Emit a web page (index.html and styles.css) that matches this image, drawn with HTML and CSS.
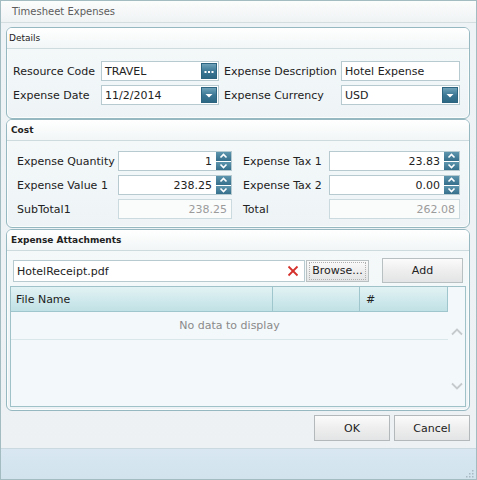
FILE: index.html
```html
<!DOCTYPE html>
<html>
<head>
<meta charset="utf-8">
<link rel="stylesheet" href="styles.css">
</head>
<body>
<div class="window">
  <div class="titlebar">Timesheet Expenses</div>
  <div class="main">
    <section class="panel details">
      <div class="panel-header">Details</div>
      <div class="details-grid">
        <span class="lbl">Resource Code</span>
        <div class="input"><span class="val">TRAVEL</span><span class="ibtn"><svg width="14" height="14" viewBox="0 0 14 14"><rect x="2.5" y="7" width="2" height="2" fill="#fff"/><rect x="6" y="7" width="2" height="2" fill="#fff"/><rect x="9.5" y="7" width="2" height="2" fill="#fff"/></svg></span></div>
        <span class="lbl lbl2">Expense Description</span>
        <div class="input"><span class="val">Hotel Expense</span></div>
        <span class="lbl">Expense Date</span>
        <div class="input"><span class="val">11/2/2014</span><span class="ibtn"><svg width="14" height="14" viewBox="0 0 14 14"><polygon points="3.5,6 10.5,6 7,9.5" fill="#fff"/></svg></span></div>
        <span class="lbl lbl2">Expense Currency</span>
        <div class="input"><span class="val">USD</span><span class="ibtn"><svg width="14" height="14" viewBox="0 0 14 14"><polygon points="3.5,6 10.5,6 7,9.5" fill="#fff"/></svg></span></div>
      </div>
    </section>
    <section class="panel cost">
      <div class="panel-header bold">Cost</div>
      <div class="cost-grid">
        <span class="lbl">Expense Quantity</span>
        <div class="input num"><span class="val">1</span><span class="spin"><span class="sp up"><svg width="13" height="8" viewBox="0 0 13 8"><polyline points="3.5,5.5 6.5,2.5 9.5,5.5" fill="none" stroke="#fff" stroke-width="1.6"/></svg></span><span class="sp dn"><svg width="13" height="8" viewBox="0 0 13 8"><polyline points="3.5,2.5 6.5,5.5 9.5,2.5" fill="none" stroke="#fff" stroke-width="1.6"/></svg></span></span></div>
        <span class="lbl lbl2">Expense Tax 1</span>
        <div class="input num"><span class="val">23.83</span><span class="spin"><span class="sp up"><svg width="13" height="8" viewBox="0 0 13 8"><polyline points="3.5,5.5 6.5,2.5 9.5,5.5" fill="none" stroke="#fff" stroke-width="1.6"/></svg></span><span class="sp dn"><svg width="13" height="8" viewBox="0 0 13 8"><polyline points="3.5,2.5 6.5,5.5 9.5,2.5" fill="none" stroke="#fff" stroke-width="1.6"/></svg></span></span></div>
        <span class="lbl">Expense Value 1</span>
        <div class="input num"><span class="val">238.25</span><span class="spin"><span class="sp up"><svg width="13" height="8" viewBox="0 0 13 8"><polyline points="3.5,5.5 6.5,2.5 9.5,5.5" fill="none" stroke="#fff" stroke-width="1.6"/></svg></span><span class="sp dn"><svg width="13" height="8" viewBox="0 0 13 8"><polyline points="3.5,2.5 6.5,5.5 9.5,2.5" fill="none" stroke="#fff" stroke-width="1.6"/></svg></span></span></div>
        <span class="lbl lbl2">Expense Tax 2</span>
        <div class="input num"><span class="val">0.00</span><span class="spin"><span class="sp up"><svg width="13" height="8" viewBox="0 0 13 8"><polyline points="3.5,5.5 6.5,2.5 9.5,5.5" fill="none" stroke="#fff" stroke-width="1.6"/></svg></span><span class="sp dn"><svg width="13" height="8" viewBox="0 0 13 8"><polyline points="3.5,2.5 6.5,5.5 9.5,2.5" fill="none" stroke="#fff" stroke-width="1.6"/></svg></span></span></div>
        <span class="lbl">SubTotal1</span>
        <div class="input num disabled"><span class="val">238.25</span></div>
        <span class="lbl lbl2">Total</span>
        <div class="input num disabled"><span class="val">262.08</span></div>
      </div>
    </section>
    <section class="panel attach">
      <div class="panel-header bold">Expense Attachments</div>
      <div class="attach-body">
        <div class="file-row">
          <div class="file-input"><span class="val">HotelReceipt.pdf</span><svg class="clear" width="12" height="12" viewBox="0 0 12 12"><line x1="1.5" y1="1.5" x2="10.5" y2="10.5" stroke="#d5312c" stroke-width="1.8"/><line x1="10.5" y1="1.5" x2="1.5" y2="10.5" stroke="#d5312c" stroke-width="1.8"/></svg></div>
          <div class="btn browse"><span class="focus">Browse...</span></div>
          <div class="btn add">Add</div>
        </div>
        <div class="grid">
          <div class="gh c1">File Name</div>
          <div class="gh c2"></div>
          <div class="gh c3">#</div>
          <div class="scroll">
            <svg width="14" height="8" viewBox="0 0 14 8"><polyline points="2,6.5 7,1.5 12,6.5" fill="none" stroke="#c5cacc" stroke-width="1.8"/></svg>
            <svg class="down" width="14" height="8" viewBox="0 0 14 8"><polyline points="2,1.5 7,6.5 12,1.5" fill="none" stroke="#c5cacc" stroke-width="1.8"/></svg>
          </div>
          <div class="empty">No data to display</div>
        </div>
      </div>
    </section>
    <div class="actions">
      <div class="btn dlg">OK</div>
      <div class="btn dlg">Cancel</div>
    </div>
  </div>
  <div class="footer">
    <svg class="grip" width="10" height="10" viewBox="0 0 10 10"><rect x="8" y="2" width="1.5" height="1.5" fill="#a9b9c3"/><rect x="5" y="5" width="1.5" height="1.5" fill="#a9b9c3"/><rect x="8" y="5" width="1.5" height="1.5" fill="#a9b9c3"/><rect x="2" y="8" width="1.5" height="1.5" fill="#a9b9c3"/><rect x="5" y="8" width="1.5" height="1.5" fill="#a9b9c3"/><rect x="8" y="8" width="1.5" height="1.5" fill="#a9b9c3"/></svg>
  </div>
</div>
</body>
</html>
```

FILE: styles.css
```css
* { box-sizing: border-box; }
html, body { margin: 0; padding: 0; }
body {
  width: 477px;
  height: 480px;
  font-family: "DejaVu Sans", Verdana, sans-serif;
  font-size: 11px;
  color: #222;
  background: #fff;
}
.window {
  width: 477px;
  height: 480px;
  border: 1px solid #a3bcc2;
  display: flex;
  flex-direction: column;
  background: #ebf1f3;
}
.titlebar {
  flex: none;
  height: 22px;
  line-height: 22px;
  padding-left: 11px;
  font-size: 10px;
  color: #5c5c5c;
  background: linear-gradient(#fbfcfc, #f0f3f4);
  border-bottom: 1px solid #d4dde0;
}
.main {
  flex: 1;
  display: flex;
  flex-direction: column;
  padding: 4px 6px 0 5px;
  background: linear-gradient(#eef3f5, #edf1f3);
}
.panel {
  border: 1px solid #96b8c0;
  border-radius: 6px;
  background: linear-gradient(#f5f9fa, #eef4f6);
  box-shadow: inset 0 0 0 1px #fbfdfd;
  overflow: hidden;
  flex: none;
}
.panel-header {
  height: 21px;
  line-height: 20px;
  padding-left: 2px;
  font-size: 9px;
  color: #222;
  background: linear-gradient(#ffffff, #f2f6f7);
  border-bottom: 1px solid #cddbdf;
}
.panel-header.bold {
  font-weight: bold;
  padding-left: 4px;
}
.details { height: 92px; }
.cost { height: 109px; }
.attach { height: 182px; margin-top: 1px; }

.lbl {
  line-height: 21px;
  white-space: nowrap;
  color: #222;
}
.lbl2 { padding-left: 5px; }

.details-grid {
  display: grid;
  grid-template-columns: 88px 118px 122px 119px;
  grid-auto-rows: 20px;
  row-gap: 4px;
  padding: 12px 0 0 6px;
}
.cost-grid {
  display: grid;
  grid-template-columns: 101px 114px 97px 131px;
  grid-auto-rows: 20px;
  row-gap: 4px;
  padding: 10px 0 0 10px;
}
.cost-grid .lbl2 { padding-left: 11px; }

.input {
  height: 20px;
  border: 1px solid #b6cad0;
  background: #fff;
  display: flex;
  align-items: center;
}
.input .val {
  flex: 1;
  padding-left: 3px;
  white-space: nowrap;
  line-height: 18px;
  padding-top: 1px;
}
.input.num .val {
  text-align: right;
  padding-right: 4px;
}
.input.disabled {
  border-color: #cbdadf;
  background: #fafcfc;
}
.input.disabled .val { color: #9b9b9b; }
.ibtn {
  width: 16px;
  height: 16px;
  margin-right: 1px;
  border: 1px solid #2d6480;
  background: linear-gradient(#6fa2b9, #3c7895 50%, #2c6884);
  display: flex;
  align-items: center;
  justify-content: center;
}
.spin {
  width: 15px;
  height: 18px;
  display: flex;
  flex-direction: column;
  gap: 1px;
}
.sp {
  flex: 1;
  background: linear-gradient(#5e95ae, #356f8b);
  display: flex;
  align-items: center;
  justify-content: center;
}

.attach-body {
  padding: 7px 3px 0 3px;
}
.file-row {
  height: 25px;
  display: flex;
  align-items: center;
}
.file-input {
  width: 292px;
  height: 22px;
  margin-left: 3px;
  border: 1px solid #b6cad0;
  background: #fff;
  display: flex;
  align-items: center;
}
.file-input .val { flex: 1; padding-left: 3px; padding-top: 1px; }
.file-input .clear { margin-right: 5px; }
.btn {
  display: flex;
  align-items: center;
  justify-content: center;
  border: 1px solid #b9c0c2;
  background: linear-gradient(#fbfbfb, #eeeeee 50%, #e3e4e5);
  color: #222;
  font-size: 11px;
}
.browse {
  width: 63px;
  height: 22px;
  margin-left: 1px;
}
.browse .focus {
  border: 1px dotted #b0b0b0;
  padding: 1px 2px;
  line-height: 14px;
}
.add {
  width: 81px;
  height: 25px;
  margin-left: 13px;
}
.grid {
  margin-top: 3px;
  height: 121px;
  border: 1px solid #9fc2c9;
  background: #f3f8fa;
  display: grid;
  grid-template-columns: 262px 87px 88px 1fr;
  grid-template-rows: 25px 28px 1fr;
}
.gh {
  background: linear-gradient(#e2f2f4, #c0e1e5);
  border-right: 1px solid #9fc6cc;
  border-bottom: 1px solid #9fc6cc;
  line-height: 25px;
  padding-left: 5px;
  white-space: nowrap;
}
.gh.c3 { padding-left: 6px; }
.scroll {
  grid-column: 4;
  grid-row: 1 / 4;
  display: flex;
  flex-direction: column;
  align-items: center;
  padding-top: 41px;
}
.scroll .down { margin-top: 46px; }
.empty {
  grid-column: 1 / 4;
  grid-row: 2;
  border-bottom: 1px solid #dae7ea;
  text-align: center;
  line-height: 27px;
  color: #8a8a8a;
}
.actions {
  display: flex;
  justify-content: flex-end;
  gap: 4px;
  margin-top: 4px;
}
.dlg {
  width: 76px;
  height: 26px;
  border-color: #b3b9bb;
}
.footer {
  flex: none;
  height: 31px;
  border-top: 1px solid #cad8df;
  background: linear-gradient(#d8e7f1, #d2e3ee);
  display: flex;
  justify-content: flex-end;
  align-items: flex-end;
  padding: 0 2px 1px 0;
}
```
